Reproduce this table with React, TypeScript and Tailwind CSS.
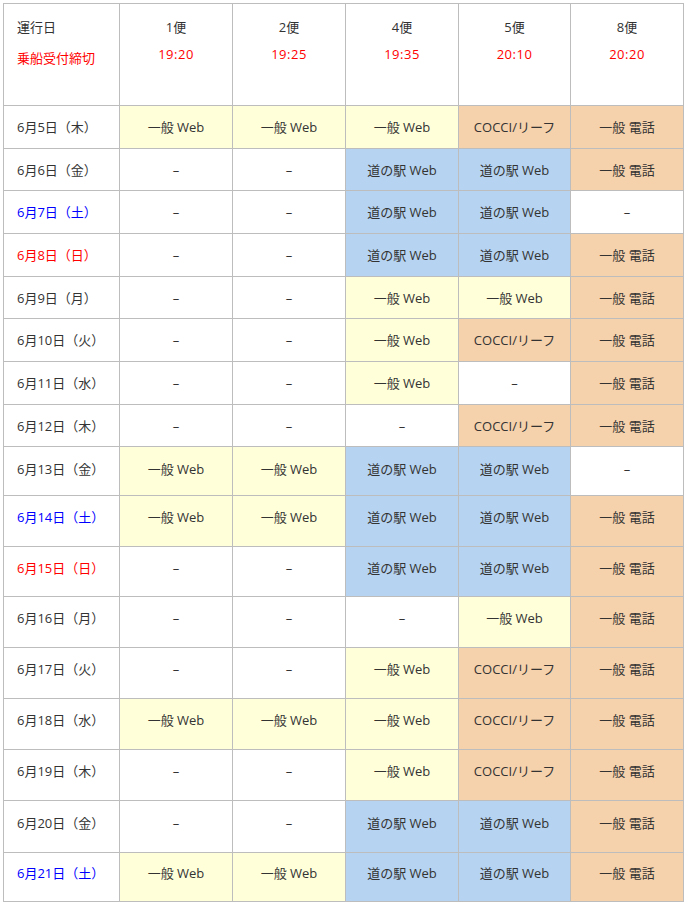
import React from "react";

type Kind = "Y" | "B" | "C" | "O" | "-";
type Row = {
  date: string;
  tone: "black" | "blue" | "red";
  cells: Kind[];
};

const flights = [
  { name: "1便", time: "19:20" },
  { name: "2便", time: "19:25" },
  { name: "4便", time: "19:35" },
  { name: "5便", time: "20:10" },
  { name: "8便", time: "20:20" },
];

// Y = 一般 Web, B = 道の駅 Web, C = COCCI/リーフ, O = 一般 電話
const rows: Row[] = [
  { date: "6月5日（木）", tone: "black", cells: ["Y", "Y", "Y", "C", "O"] },
  { date: "6月6日（金）", tone: "black", cells: ["-", "-", "B", "B", "O"] },
  { date: "6月7日（土）", tone: "blue", cells: ["-", "-", "B", "B", "-"] },
  { date: "6月8日（日）", tone: "red", cells: ["-", "-", "B", "B", "O"] },
  { date: "6月9日（月）", tone: "black", cells: ["-", "-", "Y", "Y", "O"] },
  { date: "6月10日（火）", tone: "black", cells: ["-", "-", "Y", "C", "O"] },
  { date: "6月11日（水）", tone: "black", cells: ["-", "-", "Y", "-", "O"] },
  { date: "6月12日（木）", tone: "black", cells: ["-", "-", "-", "C", "O"] },
  { date: "6月13日（金）", tone: "black", cells: ["Y", "Y", "B", "B", "-"] },
  { date: "6月14日（土）", tone: "blue", cells: ["Y", "Y", "B", "B", "O"] },
  { date: "6月15日（日）", tone: "red", cells: ["-", "-", "B", "B", "O"] },
  { date: "6月16日（月）", tone: "black", cells: ["-", "-", "-", "Y", "O"] },
  { date: "6月17日（火）", tone: "black", cells: ["-", "-", "Y", "C", "O"] },
  { date: "6月18日（水）", tone: "black", cells: ["Y", "Y", "Y", "C", "O"] },
  { date: "6月19日（木）", tone: "black", cells: ["-", "-", "Y", "C", "O"] },
  { date: "6月20日（金）", tone: "black", cells: ["-", "-", "B", "B", "O"] },
  { date: "6月21日（土）", tone: "blue", cells: ["Y", "Y", "B", "B", "O"] },
];

const cellStyle: Record<Kind, { label: string; bg: string }> = {
  Y: { label: "一般 Web", bg: "bg-[#ffffda]" },
  B: { label: "道の駅 Web", bg: "bg-[#b6d3f1]" },
  C: { label: "COCCI/リーフ", bg: "bg-[#f5d1ac]" },
  O: { label: "一般 電話", bg: "bg-[#f5d1ac]" },
  "-": { label: "–", bg: "bg-white" },
};

const toneClass = {
  black: "text-[#333]",
  blue: "text-[#0000ff]",
  red: "text-[#ff0000]",
};

// taller rows sit text a little above centre
const rowPad = (i: number) => (i >= 9 ? "pb-[6px]" : i === 8 ? "pb-[2px]" : "pt-[2px]");

const App = () => {
  return (
    <div
      className="p-[3px] bg-white min-h-screen text-[13px] text-[#333]"
      style={{ fontFamily: '"Open Sans", "Noto Sans CJK JP", sans-serif' }}
    >
      <div className="grid w-fit bg-[#bdbdbd] p-px gap-px grid-cols-[115px_112px_112px_112px_111px_112px] grid-rows-[101px_42px_41px_42px_42px_41px_42px_42px_41px_48px_50px_49px_50px_50px_50px_50px_51px_48px]">
        {/* header */}
        <div className="bg-white pl-[13px] pt-[13px] leading-5">
          <div>運行日</div>
          <div className="mt-[11px] text-[#ff0000]">乗船受付締切</div>
        </div>
        {flights.map((f) => (
          <div key={f.name} className="bg-white pt-[13px] leading-5 text-center">
            <div>{f.name}</div>
            <div className="mt-[7px] text-[#ff0000] tracking-[0.5px]">{f.time}</div>
          </div>
        ))}

        {/* body */}
        {rows.map((r, ri) => (
          <React.Fragment key={r.date}>
            <div
              className={`bg-white flex items-center pl-[13px] ${rowPad(ri)} ${toneClass[r.tone]}`}
            >
              {r.date}
            </div>
            {r.cells.map((c, i) => (
              <div
                key={i}
                className={`flex items-center justify-center ${rowPad(ri)} ${cellStyle[c].bg}`}
              >
                {cellStyle[c].label}
              </div>
            ))}
          </React.Fragment>
        ))}
      </div>
    </div>
  );
};

export default App;
